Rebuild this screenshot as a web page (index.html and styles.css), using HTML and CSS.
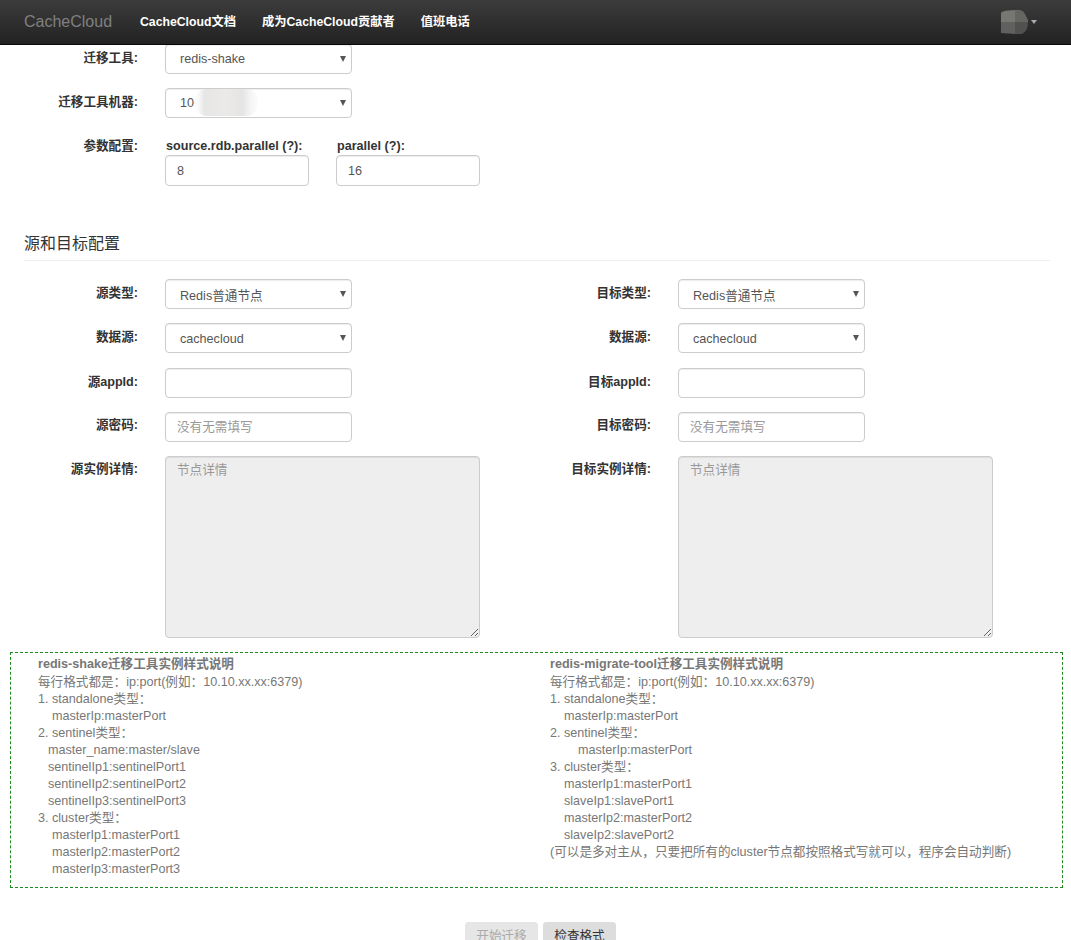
FILE: index.html
```html
<!DOCTYPE html>
<html lang="zh">
<head>
<meta charset="utf-8">
<title>CacheCloud</title>
<link rel="stylesheet" href="styles.css">
</head>
<body>
<nav class="navbar">
  <a class="brand">CacheCloud</a>
  <ul class="nav">
    <li>CacheCloud文档</li>
    <li>成为CacheCloud贡献者</li>
    <li>值班电话</li>
  </ul>
  <div class="user">
    <svg class="avatar" width="30" height="26" viewBox="0 0 30 26">
      <path d="M1 4 Q2 2 8 1.5 L15 1 L15 13 L1 13Z" fill="#767672"/>
      <path d="M15 1 Q23 0 25 5 L28 11 L28 13 L15 13Z" fill="#656562"/>
      <path d="M1 13 L15 13 L15 25 L1 24Z" fill="#60605e"/>
      <path d="M15 13 L28 13 Q28 22 22 25 L15 25Z" fill="#51514f"/>
    </svg>
    <span class="caret"></span>
  </div>
</nav>
<main class="page">
  <form class="form">
    <div class="row">
      <label class="label">迁移工具:</label>
      <div class="select-wrap"><select class="control select"><option>redis-shake</option></select></div>
    </div>
    <div class="row">
      <label class="label">迁移工具机器:</label>
      <div class="select-wrap"><select class="control select"><option>10</option></select><span class="blur"></span></div>
    </div>
    <div class="row">
      <label class="label">参数配置:</label>
      <div class="params">
        <div class="param"><label class="param-label">source.rdb.parallel (?):</label><input class="control input-param" value="8"></div>
        <div class="param"><label class="param-label">parallel (?):</label><input class="control input-param" value="16"></div>
      </div>
    </div>

    <h4 class="section-title">源和目标配置</h4>

    <div class="columns">
      <div class="column">
        <div class="row">
          <label class="label">源类型:</label>
          <div class="select-wrap"><select class="control select select-low"><option>Redis普通节点</option></select></div>
        </div>
        <div class="row row-wide">
          <label class="label">数据源:</label>
          <div class="select-wrap"><select class="control select select-mid"><option>cachecloud</option></select></div>
        </div>
        <div class="row">
          <label class="label">源appId:</label>
          <input class="control input">
        </div>
        <div class="row">
          <label class="label label-up">源密码:</label>
          <input class="control input" placeholder="没有无需填写">
        </div>
        <div class="row">
          <label class="label label-up">源实例详情:</label>
          <textarea class="control area" disabled placeholder="节点详情"></textarea>
        </div>
      </div>
      <div class="column">
        <div class="row">
          <label class="label">目标类型:</label>
          <div class="select-wrap"><select class="control select select-low"><option>Redis普通节点</option></select></div>
        </div>
        <div class="row row-wide">
          <label class="label">数据源:</label>
          <div class="select-wrap"><select class="control select select-mid"><option>cachecloud</option></select></div>
        </div>
        <div class="row">
          <label class="label">目标appId:</label>
          <input class="control input">
        </div>
        <div class="row">
          <label class="label label-up">目标密码:</label>
          <input class="control input" placeholder="没有无需填写">
        </div>
        <div class="row">
          <label class="label label-up">目标实例详情:</label>
          <textarea class="control area" disabled placeholder="节点详情"></textarea>
        </div>
      </div>
    </div>

    <section class="notes">
      <div class="note">
        <div class="note-title">redis-shake迁移工具实例样式说明</div>
        <div>每行格式都是：ip:port(例如：10.10.xx.xx:6379)</div>
        <div>1. standalone类型：</div>
        <div class="in-14">masterIp:masterPort</div>
        <div>2. sentinel类型：</div>
        <div class="in-10">master_name:master/slave</div>
        <div class="in-10">sentinelIp1:sentinelPort1</div>
        <div class="in-10">sentinelIp2:sentinelPort2</div>
        <div class="in-10">sentinelIp3:sentinelPort3</div>
        <div>3. cluster类型：</div>
        <div class="in-14">masterIp1:masterPort1</div>
        <div class="in-14">masterIp2:masterPort2</div>
        <div class="in-14">masterIp3:masterPort3</div>
      </div>
      <div class="note">
        <div class="note-title">redis-migrate-tool迁移工具实例样式说明</div>
        <div>每行格式都是：ip:port(例如：10.10.xx.xx:6379)</div>
        <div>1. standalone类型：</div>
        <div class="in-14">masterIp:masterPort</div>
        <div>2. sentinel类型：</div>
        <div class="in-28">masterIp:masterPort</div>
        <div>3. cluster类型：</div>
        <div class="in-14">masterIp1:masterPort1</div>
        <div class="in-14">slaveIp1:slavePort1</div>
        <div class="in-14">masterIp2:masterPort2</div>
        <div class="in-14">slaveIp2:slavePort2</div>
        <div>(可以是多对主从，只要把所有的cluster节点都按照格式写就可以，程序会自动判断)</div>
      </div>
    </section>

    <div class="actions">
      <button type="button" class="btn" disabled>开始迁移</button>
      <button type="button" class="btn btn-active">检查格式</button>
    </div>
  </form>
</main>
</body>
</html>
```

FILE: styles.css
```css
* { box-sizing: border-box; }
html, body { margin: 0; height: 940px; overflow: hidden; background: #fff; }
body {
  font-family: "Liberation Sans", "Noto Sans CJK SC", sans-serif;
  font-size: 14px;
  line-height: 20px;
  color: #333;
}
.navbar {
  position: fixed;
  top: 0; left: 0; right: 0;
  z-index: 10;
  height: 45px;
  display: flex;
  align-items: center;
  background: linear-gradient(to bottom, #3c3c3c, #222);
  border-bottom: 1px solid #080808;
}
.brand {
  font-size: 16px;
  color: #808080;
  margin-left: 24px;
  width: 116px;
  padding-bottom: 1px;
}
.nav {
  display: flex;
  gap: 26px;
  list-style: none;
  margin: 0;
  padding: 0 0 1px;
  color: #fff;
  font-size: 12.25px;
  font-weight: bold;
}
.user {
  margin-left: auto;
  margin-right: 34px;
  display: flex;
  align-items: center;
  gap: 1px;
}
.avatar { display: block; }
.caret {
  width: 0; height: 0;
  border-left: 3.5px solid transparent;
  border-right: 3.5px solid transparent;
  border-top: 4px solid #aaa;
}
.page { padding: 44px 0 0; }
.form { display: block; }
.row {
  display: flex;
  align-items: flex-start;
  min-height: 30px;
  margin-bottom: 14px;
}
.row-wide { margin-bottom: 15px; }
.label {
  width: 138px;
  padding-top: 4px;
  margin-right: 27px;
  text-align: right;
  font-size: 12.6px;
  font-weight: bold;
  color: #333;
  flex: none;
}
.label-up { padding-top: 3px; }
.control {
  display: block;
  font: inherit;
  font-size: 12.6px;
  color: #555;
  border: 1px solid #ccc;
  border-radius: 4px;
  background: #fff;
  padding: 6px 11px;
  height: 30px;
  box-shadow: inset 0 1px 1px rgba(0,0,0,.075);
  outline: none;
}
.control::placeholder { color: #999; opacity: 1; }
.select-wrap {
  position: relative;
  width: 187px;
  height: 30px;
}
.select-wrap::after {
  content: "";
  position: absolute;
  right: 6px;
  top: 12px;
  width: 0; height: 0;
  border-left: 3px solid transparent;
  border-right: 3px solid transparent;
  border-top: 6px solid #555;
}
.select {
  width: 100%;
  appearance: none;
  padding: 4px 11px 8px 14px;
}
.select-low { padding: 6px 11px 6px 14px; }
.select-mid { padding: 5px 11px 7px 14px; }
.blur {
  position: absolute;
  left: 30px;
  top: 1px;
  width: 63px;
  height: 27px;
  border-radius: 12px;
  background: linear-gradient(to right, #fafafa 5%, #e6e6e6 15%, #eceae8 50%, #e4e4e4 75%, #f4f4f4 88%, #fdfdfd);
}
.input { width: 187px; }
.params { display: flex; gap: 27px; padding-top: 4px; }
.param { width: 144px; }
.param-label {
  display: block;
  font-size: 12.6px;
  font-weight: bold;
  white-space: nowrap;
  color: #333;
  margin-bottom: -1px;
  padding-left: 1px;
}
.input-param { width: 144px; height: 31px; }
.section-title {
  margin: 47px 21px 18px 24px;
  padding-top: 1px;
  font-size: 16px;
  line-height: 20px;
  font-weight: normal;
  color: #333;
  border-bottom: 1px solid #eee;
  height: 28px;
}
.columns { display: flex; }
.column { width: 513px; flex: none; }
.area {
  width: 315px;
  height: 182px;
  padding-top: 3px;
  background: #eee;
  resize: vertical;
}
.notes {
  display: flex;
  margin: 0 8px 0 10px;
  height: 236px;
  border: 1px dashed #1f8a1f;
  padding: 4px 27px;
  font-size: 12.6px;
  line-height: 17px;
  color: #777;
}
.note { width: 512px; flex: none; white-space: nowrap; }
.note-title { font-weight: bold; margin: -1px 0 1px; }
.in-10 { padding-left: 10px; }
.in-14 { padding-left: 14px; }
.in-28 { padding-left: 28px; }
.actions {
  display: flex;
  justify-content: center;
  gap: 5px;
  margin-top: 34px;
  padding-left: 10px;
}
.btn {
  font: inherit;
  font-size: 12.6px;
  width: 73px;
  height: 30px;
  border: 1px solid #e6e6e6;
  border-radius: 3px;
  padding: 0 0 3px;
  background: #e6e6e6;
  color: #aaa;
}
.btn-active { background: #ddd; border-color: #ddd; color: #333; }
```
